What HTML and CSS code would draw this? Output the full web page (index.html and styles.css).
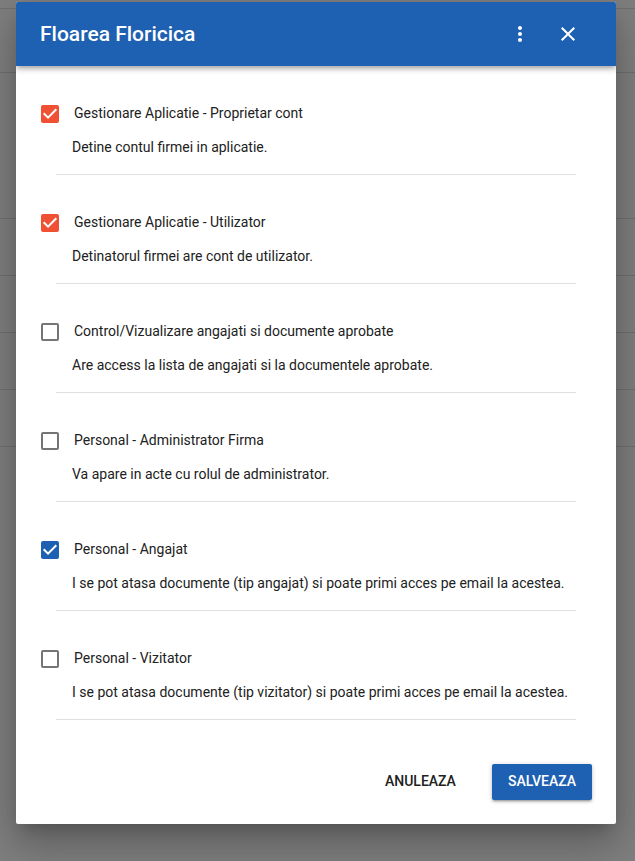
FILE: index.html
```
<!DOCTYPE html>
<html lang="ro">
<head>
<meta charset="utf-8">
<meta name="viewport" content="width=device-width, initial-scale=1">
<title>Floarea Floricica</title>
<link rel="stylesheet" href="styles.css">
</head>
<body>
<div class="screen">
  <div class="page" aria-hidden="true">
    <div class="strip"></div>
    <div class="toolbar"></div>
    <div class="heading"></div>
    <div class="row"></div>
    <div class="row"></div>
    <div class="row"></div>
    <div class="row"></div>
  </div>
  <form class="dialog" role="dialog" aria-labelledby="title">
    <header class="bar">
      <h1 class="title" id="title">Floarea Floricica</h1>
      <button class="icon-button" type="button" aria-label="Optiuni">
        <svg class="icon" viewBox="0 0 24 24"><path d="M12 8c1.1 0 2-.9 2-2s-.9-2-2-2-2 .9-2 2 .9 2 2 2zm0 2c-1.1 0-2 .9-2 2s.9 2 2 2 2-.9 2-2-.9-2-2-2zm0 6c-1.1 0-2 .9-2 2s.9 2 2 2 2-.9 2-2-.9-2-2-2z"/></svg>
      </button>
      <button class="icon-button" type="button" aria-label="Inchide">
        <svg class="icon" viewBox="0 0 24 24"><path d="M19 6.41L17.59 5 12 10.59 6.41 5 5 6.41 10.59 12 5 17.59 6.41 19 12 13.41 17.59 19 19 17.59 13.41 12z"/></svg>
      </button>
    </header>
    <div class="roles">
      <section class="role">
        <label class="choice"><input class="check check-owner" type="checkbox" checked><span class="name">Gestionare Aplicatie - Proprietar cont</span></label>
        <p class="note">Detine contul firmei in aplicatie.</p>
      </section>
      <section class="role">
        <label class="choice"><input class="check check-owner" type="checkbox" checked><span class="name">Gestionare Aplicatie - Utilizator</span></label>
        <p class="note">Detinatorul firmei are cont de utilizator.</p>
      </section>
      <section class="role">
        <label class="choice"><input class="check" type="checkbox"><span class="name">Control/Vizualizare angajati si documente aprobate</span></label>
        <p class="note">Are access la lista de angajati si la documentele aprobate.</p>
      </section>
      <section class="role">
        <label class="choice"><input class="check" type="checkbox"><span class="name">Personal - Administrator Firma</span></label>
        <p class="note">Va apare in acte cu rolul de administrator.</p>
      </section>
      <section class="role">
        <label class="choice"><input class="check" type="checkbox" checked><span class="name">Personal - Angajat</span></label>
        <p class="note">I se pot atasa documente (tip angajat) si poate primi acces pe email la acestea.</p>
      </section>
      <section class="role">
        <label class="choice"><input class="check" type="checkbox"><span class="name">Personal - Vizitator</span></label>
        <p class="note">I se pot atasa documente (tip vizitator) si poate primi acces pe email la acestea.</p>
      </section>
    </div>
    <footer class="actions">
      <button class="button" type="button">ANULEAZA</button>
      <button class="button button-primary" type="submit">SALVEAZA</button>
    </footer>
  </form>
</div>
</body>
</html>
```
FILE: styles.css
```
:root {
  --blue: #1e60b1;
  --orange: #f05033;
  --ink: #212121;
}

* {
  box-sizing: border-box;
}

body {
  margin: 0;
  background: #808080;
  color: var(--ink);
  font-family: Roboto, "Liberation Sans", sans-serif;
  font-size: 14px;
  line-height: 18px;
}

/* The dialog and the dimmed page share one grid cell. */
.screen {
  display: grid;
  min-height: 100vh;
  overflow: hidden;
}

.page,
.dialog {
  grid-area: 1 / 1;
}

.strip,
.toolbar,
.heading,
.row {
  border-bottom: 1px solid #707070;
}

.strip {
  height: 9px;
}

.toolbar {
  height: 64px;
}

.heading {
  height: 146px;
}

.row {
  height: 57px;
}

.dialog {
  align-self: start;
  margin: 2px 19px 37px 16px;
  background: #fff;
  border-radius: 2px;
  box-shadow:
    0 11px 15px -7px rgba(0, 0, 0, 0.2),
    0 24px 38px 3px rgba(0, 0, 0, 0.14),
    0 9px 46px 8px rgba(0, 0, 0, 0.12);
}

.bar {
  display: flex;
  align-items: center;
  height: 64px;
  padding: 0 24px;
  background: var(--blue);
  color: #fff;
  border-radius: 2px 2px 0 0;
  box-shadow:
    0 2px 4px -1px rgba(0, 0, 0, 0.2),
    0 4px 5px rgba(0, 0, 0, 0.14),
    0 1px 10px rgba(0, 0, 0, 0.12);
  clip-path: inset(0 0 -16px 0);
}

.title {
  flex: 1;
  margin: 0;
  font-size: 21px;
  font-weight: 500;
  line-height: 24px;
}

.icon-button {
  display: grid;
  place-items: center;
  width: 48px;
  height: 48px;
  padding: 0;
  border: 0;
  background: none;
  color: inherit;
}

.icon {
  width: 24px;
  height: 24px;
  fill: currentColor;
}

.roles {
  padding: 24px 40px 0;
}

.role {
  margin-bottom: 24px;
  padding-bottom: 18px;
  border-bottom: 1px solid #e0e0e0;
}

.choice {
  display: flex;
  align-items: center;
  gap: 15px;
  height: 48px;
  margin-left: -15px;
}

.name {
  padding-bottom: 2px;
}

.check {
  appearance: none;
  flex: none;
  width: 18px;
  height: 18px;
  margin: 0;
  border: 2px solid #757575;
  border-radius: 2px;
}

.check:checked {
  border: 0;
  background: var(--blue);
}

.check-owner:checked {
  background: var(--orange);
}

.check:checked::before {
  content: "";
  display: block;
  height: 100%;
  background: #fff;
  clip-path: polygon(39% 78%, 11% 50%, 19% 42%, 39% 62%, 81% 20%, 89% 28%);
}

.note {
  margin: 0;
  padding: 0 0 0 16px;
}

.actions {
  display: flex;
  justify-content: flex-end;
  gap: 20px;
  padding: 20px 24px 24px;
}

.button {
  height: 36px;
  padding: 0 16px 2px;
  border: 0;
  border-radius: 2px;
  background: none;
  color: var(--ink);
  font: 500 14px/18px Roboto, "Liberation Sans", sans-serif;
}

.button-primary {
  background: var(--blue);
  color: #fff;
  box-shadow:
    0 1px 5px rgba(0, 0, 0, 0.2),
    0 2px 2px rgba(0, 0, 0, 0.14),
    0 3px 1px -2px rgba(0, 0, 0, 0.12);
}
```
